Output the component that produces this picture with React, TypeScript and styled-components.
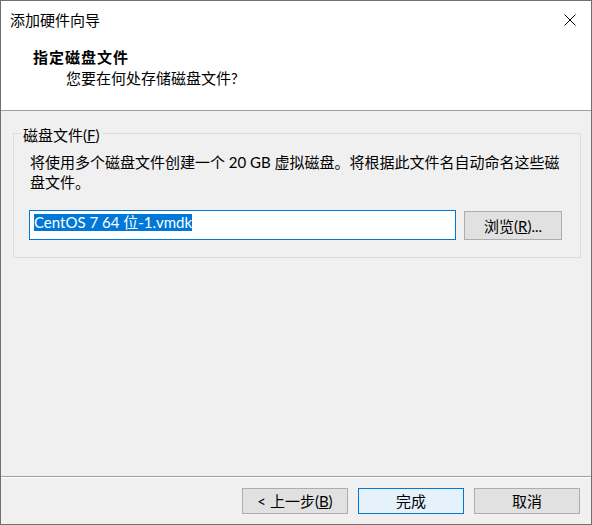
import React from "react";
import styled, { createGlobalStyle } from "styled-components";

const GlobalStyle = createGlobalStyle`
  html, body {
    margin: 0;
    padding: 0;
    background: #f0f0f0;
  }
  * { box-sizing: border-box; }
`;

const FONT = `"Segoe UI", Lato, "Noto Sans CJK SC", sans-serif`;

const Window = styled.div`
  width: 592px;
  height: 525px;
  border: 1px solid #6f6f6f;
  display: flex;
  flex-direction: column;
  background: #f0f0f0;
  font-family: ${FONT};
  font-size: 15px;
  color: #000;
`;

const Header = styled.div`
  height: 110px;
  background: #fff;
  border-bottom: 1px solid #a0a0a0;
  display: flex;
  flex-direction: column;
`;

const TitleBar = styled.div`
  height: 38px;
  display: flex;
  align-items: center;
  justify-content: space-between;
  padding: 0 15px 0 9px;
`;

const TitleText = styled.span`
  font-size: 15px;
  line-height: 20px;
`;

const CloseIcon = styled.svg`
  width: 12px;
  height: 12px;
  display: block;
`;

const HeaderContent = styled.div`
  padding: 8px 0 0 32px;
  display: flex;
  flex-direction: column;
`;

const PageTitle = styled.div`
  font-weight: bold;
  line-height: 21px;
  letter-spacing: 1px;
`;

const PageSubtitle = styled.div`
  line-height: 21px;
  padding-left: 33px;
`;

const Body = styled.div`
  flex: 1;
  padding: 22px 10px 0 12px;
`;

const GroupBox = styled.div`
  position: relative;
  height: 125px;
  border: 1px solid #dcdcdc;
  padding: 18px 16px 0 16px;
`;

const GroupLabel = styled.span`
  position: absolute;
  left: 7px;
  top: -9px;
  padding: 0 2px;
  line-height: 20px;
  background: #f0f0f0;
`;

const Description = styled.div`
  line-height: 20px;
  white-space: nowrap;
`;

const FieldRow = styled.div`
  display: flex;
  align-items: flex-start;
  gap: 8px;
  margin-top: 18px;
  margin-left: -1px;
`;

const TextField = styled.div`
  width: 427px;
  height: 30px;
  background: #fff;
  border: 1px solid #0078d7;
  padding: 2px 0 0 4px;
`;

const Selected = styled.span`
  display: inline-block;
  height: 17px;
  line-height: 17px;
  background: #0078d7;
  color: #fff;
  white-space: nowrap;
`;

const Button = styled.button<{ $default?: boolean; $width: number; $height: number }>`
  width: ${(p) => p.$width}px;
  height: ${(p) => p.$height}px;
  margin: 0;
  padding: 0;
  font-family: ${FONT};
  font-size: 15px;
  line-height: 20px;
  color: #000;
  background: ${(p) => (p.$default ? "#e5f1fb" : "#e1e1e1")};
  border: 1px solid ${(p) => (p.$default ? "#0078d7" : "#adadad")};
  border-radius: 0;
  display: flex;
  align-items: center;
  justify-content: center;
`;

const BrowseButton = styled(Button)`
  margin-top: 1px;
`;

const Footer = styled.div`
  border-top: 1px solid #a0a0a0;
  box-shadow: inset 0 1px 0 #fff;
  padding: 11px 11px 10px 0;
  display: flex;
  justify-content: flex-end;
  gap: 10px;
`;

export default function App() {
  return (
    <>
      <GlobalStyle />
      <Window>
        <Header>
          <TitleBar>
            <TitleText>添加硬件向导</TitleText>
            <CloseIcon viewBox="0 0 12 12">
              <path d="M0.5 0.5 L11.5 11.5 M11.5 0.5 L0.5 11.5" stroke="#000" strokeWidth="1" fill="none" />
            </CloseIcon>
          </TitleBar>
          <HeaderContent>
            <PageTitle>指定磁盘文件</PageTitle>
            <PageSubtitle>您要在何处存储磁盘文件?</PageSubtitle>
          </HeaderContent>
        </Header>
        <Body>
          <GroupBox>
            <GroupLabel>
              磁盘文件(<u>F</u>)
            </GroupLabel>
            <Description>将使用多个磁盘文件创建一个 20 GB 虚拟磁盘。将根据此文件名自动命名这些磁</Description>
            <Description>盘文件。</Description>
            <FieldRow>
              <TextField>
                <Selected>CentOS 7 64 位-1.vmdk</Selected>
              </TextField>
              <BrowseButton $width={98} $height={29}>
                浏览(<u>R</u>)...
              </BrowseButton>
            </FieldRow>
          </GroupBox>
        </Body>
        <Footer>
          <Button $width={106} $height={26}>
            &lt; 上一步(<u>B</u>)
          </Button>
          <Button $default $width={106} $height={26}>
            完成
          </Button>
          <Button $width={106} $height={26}>
            取消
          </Button>
        </Footer>
      </Window>
    </>
  );
}
